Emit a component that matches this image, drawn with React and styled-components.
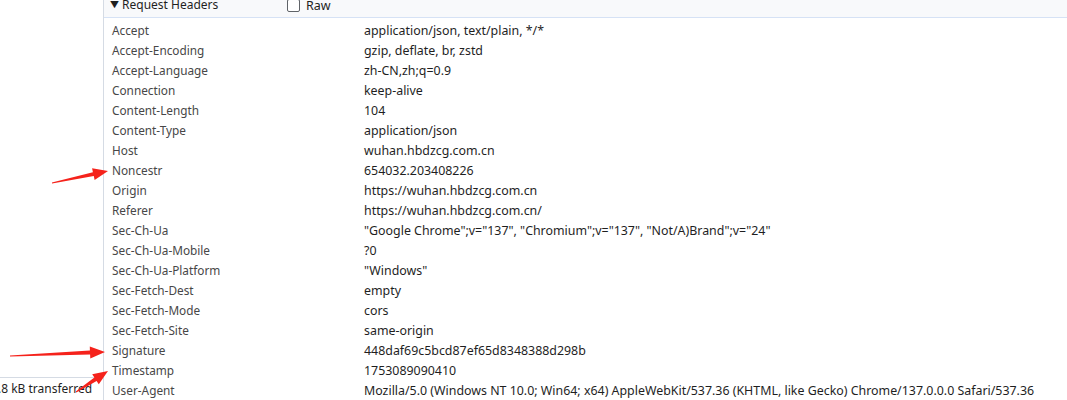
import React from "react";
import styled, { createGlobalStyle } from "styled-components";

const headers = [
    ["Accept", "application/json, text/plain, */*"],
    ["Accept-Encoding", "gzip, deflate, br, zstd"],
    ["Accept-Language", "zh-CN,zh;q=0.9"],
    ["Connection", "keep-alive"],
    ["Content-Length", "104"],
    ["Content-Type", "application/json"],
    ["Host", "wuhan.hbdzcg.com.cn"],
    ["Noncestr", "654032.203408226"],
    ["Origin", "https://wuhan.hbdzcg.com.cn"],
    ["Referer", "https://wuhan.hbdzcg.com.cn/"],
    ["Sec-Ch-Ua", "\"Google Chrome\";v=\"137\", \"Chromium\";v=\"137\", \"Not/A)Brand\";v=\"24\""],
    ["Sec-Ch-Ua-Mobile", "?0"],
    ["Sec-Ch-Ua-Platform", "\"Windows\""],
    ["Sec-Fetch-Dest", "empty"],
    ["Sec-Fetch-Mode", "cors"],
    ["Sec-Fetch-Site", "same-origin"],
    ["Signature", "448daf69c5bcd87ef65d8348388d298b"],
    ["Timestamp", "1753089090410"],
    ["User-Agent", "Mozilla/5.0 (Windows NT 10.0; Win64; x64) AppleWebKit/537.36 (KHTML, like Gecko) Chrome/137.0.0.0 Safari/537.36"],
];

// red annotation arrows: [tailX, tailY, tipX, tipY]
const arrows = [
    [52, 183, 108, 171],
    [10, 356, 105, 352],
    [76, 392, 108, 371],
];

const arrowPoints = ([x1, y1, x2, y2]) => {
    const dx = x2 - x1;
    const dy = y2 - y1;
    const len = Math.hypot(dx, dy);
    const ux = dx / len;
    const uy = dy / len;
    const nx = -uy;
    const ny = ux;
    const head = 15;
    const bx = x2 - ux * head;
    const by = y2 - uy * head;
    const pts = [
        [x1 + nx * 0.5, y1 + ny * 0.5],
        [bx + nx * 2, by + ny * 2],
        [bx + nx * 6, by + ny * 6],
        [x2, y2],
        [bx - nx * 6, by - ny * 6],
        [bx - nx * 2, by - ny * 2],
        [x1 - nx * 0.5, y1 - ny * 0.5],
    ];
    return pts.map((p) => p.map((v) => v.toFixed(1)).join(",")).join(" ");
};

const App = () => {
    return (
        <Page>
            <GlobalStyle />
            <SidePanel>
                <Summary>.8 kB transferred</Summary>
            </SidePanel>
            <Main>
                <SectionHeader>
                    <Title>
                        <Caret>▼</Caret>
                        Request Headers
                    </Title>
                    <RawToggle>
                        <Check />
                        Raw
                    </RawToggle>
                </SectionHeader>
                <HeaderList>
                    {headers.map(([name, value]) => (
                        <Row key={name}>
                            <Name>{name}</Name>
                            <Value>{value}</Value>
                        </Row>
                    ))}
                </HeaderList>
            </Main>
            <Annotations width="1067" height="400" viewBox="0 0 1067 400">
                {arrows.map((a, i) => (
                    <polygon key={i} points={arrowPoints(a)} fill="#f5221b" />
                ))}
            </Annotations>
        </Page>
    );
};

const GlobalStyle = createGlobalStyle`
    html, body {
        margin: 0;
        padding: 0;
        background: #fff;
    }
    body {
        font-family: "Noto Sans", "Noto Sans CJK SC", sans-serif;
        font-size: 12px;
        color: #1f1f1f;
    }
`;

const Page = styled.div`
    position: relative;
    display: flex;
    width: 1067px;
    height: 400px;
    overflow: hidden;
    background: #fff;
`;

const SidePanel = styled.div`
    width: 103px;
    flex: none;
    display: flex;
    flex-direction: column;
    justify-content: flex-end;
    border-right: 1px solid #d5dbe4;
`;

const Summary = styled.div`
    height: 21px;
    border-top: 1px solid #d5dbe4;
    padding-top: 1px;
    line-height: 20px;
    white-space: nowrap;
    overflow: hidden;
    color: #1f1f1f;
    font-size: 12px;
    margin-left: -2px;
`;

const Main = styled.div`
    flex: 1;
    min-width: 0;
    display: flex;
    flex-direction: column;
`;

const SectionHeader = styled.div`
    height: 28px;
    margin-top: -9px;
    display: flex;
    align-items: center;
    background: #f8f9fb;
    border-bottom: 1px solid #d6e2f5;
    padding-left: 6px;
    font-size: 12px;
    color: #1f1f1f;
`;

const Title = styled.div`
    width: 177px;
    display: flex;
    align-items: center;
    white-space: nowrap;
`;

const Caret = styled.span`
    font-size: 9px;
    margin-right: 3px;
`;

const RawToggle = styled.label`
    display: flex;
    align-items: center;
    gap: 6px;
    margin-top: 3px;
    font-size: 12.5px;
`;

const Check = styled.span`
    width: 11px;
    height: 11px;
    border: 1px solid #5f6368;
    border-radius: 2px;
    background: #fff;
`;

const HeaderList = styled.div`
    padding-top: 2px;
    display: flex;
    flex-direction: column;
`;

const Row = styled.div`
    display: flex;
    height: 20px;
    align-items: center;
    padding-left: 8px;
    white-space: nowrap;
`;

const Name = styled.div`
    width: 252px;
    flex: none;
    color: #474747;
    font-size: 11.8px;
`;

const Value = styled.div`
    color: #1f1f1f;
    font-size: 12.4px;
`;

const Annotations = styled.svg`
    position: absolute;
    left: 0;
    top: 0;
    pointer-events: none;
`;

export default App;
